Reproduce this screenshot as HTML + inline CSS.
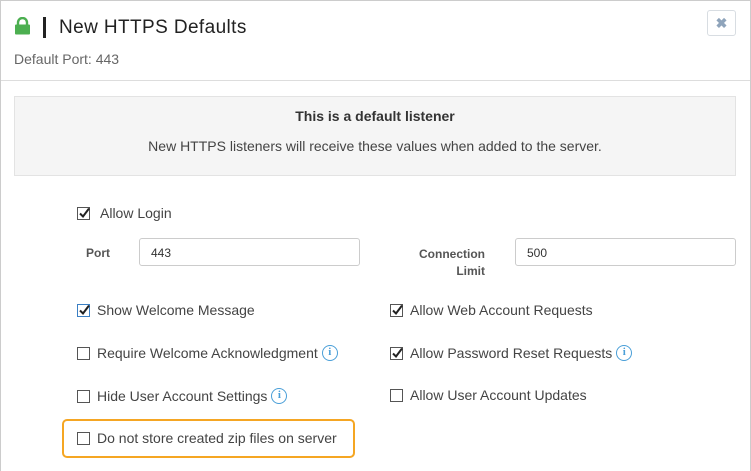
<!DOCTYPE html>
<html><head><style>
body{margin:0;width:751px;height:470px;overflow:hidden;font-family:"Liberation Sans",sans-serif;background:#fff;position:relative;color:#333}
.frame{position:absolute;left:0;top:0;width:749px;height:470px;border:1px solid #ccc;border-bottom:none}
.a{position:absolute;white-space:nowrap}
.cb{position:absolute;width:11px;height:11px;border:1px solid #555;background:#fff}
.cb.on.blue{border-color:#3a7fc4}
.cb svg{position:absolute;left:0;top:-1px}
.lbl{position:absolute;font-size:14px;color:#444;white-space:nowrap;display:flex;align-items:center;height:16px}
.info{display:inline-block;box-sizing:border-box;width:16px;height:16px;border:1.5px solid #4a9fd8;border-radius:50%;color:#4a9fd8;font-size:11px;font-weight:bold;text-align:center;line-height:13px;font-family:"Liberation Serif",serif;margin-left:4px}
.inp{position:absolute;height:28px;border:1px solid #ccc;border-radius:3px;font-size:12px;line-height:28px;padding-left:11px;box-sizing:border-box;color:#333}
.fl{position:absolute;font-size:12px;font-weight:bold;color:#555;text-align:right}
</style></head><body>
<div class="frame"></div>
<svg class="a" style="left:14px;top:17px" width="17" height="18" viewBox="0 0 17 18"><path d="M4 8V5.5a4.5 4.5 0 0 1 9 0V8" fill="none" stroke="#4caf50" stroke-width="2.4"/><rect x="1" y="7.5" width="15" height="10" rx="1" fill="#4caf50"/></svg>
<div class="a" style="left:43px;top:17px;width:3px;height:21px;background:#222"></div>
<div class="a" style="left:59px;top:17px;font-size:19px;letter-spacing:0.4px;color:#222">New HTTPS Defaults</div>
<div class="a" style="left:14px;top:51px;font-size:14px;color:#666">Default Port: 443</div>
<div class="a" style="left:707px;top:10px;width:27px;height:24px;border:1px solid #d8dde2;border-radius:3px;text-align:center;line-height:24px;color:#8fa4bb;font-size:14px;font-weight:bold">✖</div>
<div class="a" style="left:1px;top:80px;width:749px;height:1px;background:#ddd"></div>
<div class="a" style="left:14px;top:96px;width:720px;height:78px;background:#f5f5f5;border:1px solid #e3e3e3"></div>
<div class="a" style="left:14px;top:108px;width:722px;text-align:center;font-size:14px;font-weight:bold;color:#333">This is a default listener</div>
<div class="a" style="left:14px;top:138px;width:722px;text-align:center;font-size:14px;color:#444">New HTTPS listeners will receive these values when added to the server.</div>

<div class="cb" style="left:77px;top:207px"><svg width="12" height="12"><path d="M2 6.5l3 3 6-8" fill="none" stroke="#222" stroke-width="2"/></svg></div>
<div class="lbl" style="left:100px;top:205px">Allow Login</div>
<div class="fl" style="left:86px;top:246px">Port</div>
<div class="inp" style="left:139px;top:238px;width:221px">443</div>
<div class="fl" style="left:400px;top:246px;width:85px;line-height:17px">Connection<br>Limit</div>
<div class="inp" style="left:515px;top:238px;width:221px">500</div>

<div class="cb blue on" style="left:77px;top:304px"><svg width="12" height="12"><path d="M2 6.5l3 3 6-8" fill="none" stroke="#222" stroke-width="2"/></svg></div>
<div class="lbl" style="left:97px;top:302px">Show Welcome Message</div>
<div class="cb" style="left:77px;top:347px"></div>
<div class="lbl" style="left:97px;top:345px">Require Welcome Acknowledgment<span class="info">i</span></div>
<div class="cb" style="left:77px;top:390px"></div>
<div class="lbl" style="left:97px;top:388px">Hide User Account Settings<span class="info">i</span></div>
<div class="a" style="left:62px;top:419px;width:289px;height:35px;border:2px solid #f5a623;border-radius:5px"></div>
<div class="cb" style="left:77px;top:432px"></div>
<div class="lbl" style="left:97px;top:430px">Do not store created zip files on server</div>

<div class="cb" style="left:390px;top:304px"><svg width="12" height="12"><path d="M2 6.5l3 3 6-8" fill="none" stroke="#222" stroke-width="2"/></svg></div>
<div class="lbl" style="left:410px;top:302px">Allow Web Account Requests</div>
<div class="cb" style="left:390px;top:347px"><svg width="12" height="12"><path d="M2 6.5l3 3 6-8" fill="none" stroke="#222" stroke-width="2"/></svg></div>
<div class="lbl" style="left:410px;top:345px">Allow Password Reset Requests<span class="info">i</span></div>
<div class="cb" style="left:390px;top:389px"></div>
<div class="lbl" style="left:410px;top:387px">Allow User Account Updates</div>
</body></html>
